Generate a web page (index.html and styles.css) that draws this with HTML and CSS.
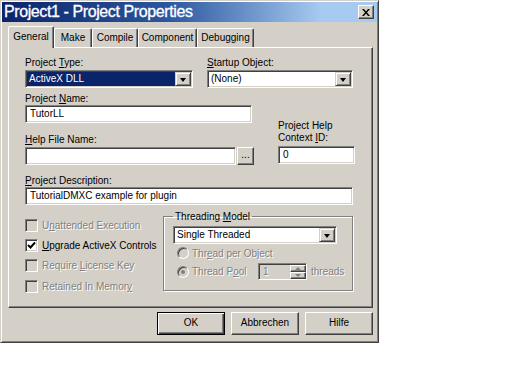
FILE: index.html
```html
<!DOCTYPE html>
<html>
<head>
<meta charset="utf-8">
<link rel="stylesheet" href="styles.css">
</head>
<body>
<div class="dialog">
  <div class="titlebar">
    <span class="title">Project1 - Project Properties</span>
    <span class="close"><svg width="8" height="7" viewBox="0 0 8 7"><path d="M0 0h2l2 2.4 2-2.4h2l-3 3.5 3 3.5h-2l-2-2.4-2 2.4h-2l3-3.5z" fill="#000"/></svg></span>
  </div>
  <div class="tabs">
    <div class="tab active t-general">General</div>
    <div class="tab t-make">Make</div>
    <div class="tab t-compile">Compile</div>
    <div class="tab t-component">Component</div>
    <div class="tab t-debug">Debugging</div>
  </div>
  <div class="panel">
    <div class="row-top">
      <div class="col-type">
        <div class="label">Project <u>T</u>ype:</div>
        <div class="combo"><span class="combo-text selected">ActiveX DLL</span><span class="drop"><i class="arrow"></i></span></div>
      </div>
      <div class="col-startup">
        <div class="label"><u>S</u>tartup Object:</div>
        <div class="combo"><span class="combo-text">(None)</span><span class="drop"><i class="arrow"></i></span></div>
      </div>
    </div>
    <div class="row-mid">
      <div class="col-name">
        <div class="label">Project <u>N</u>ame:</div>
        <div class="textbox name-box">TutorLL</div>
        <div class="label help-label"><u>H</u>elp File Name:</div>
        <div class="help-row">
          <div class="textbox help-box"></div>
          <div class="btn browse">...</div>
        </div>
      </div>
      <div class="col-context">
        <div class="label2">Project Help<br>Context <u>I</u>D:</div>
        <div class="textbox context-box">0</div>
      </div>
    </div>
    <div class="label desc-label"><u>P</u>roject Description:</div>
    <div class="textbox desc-box">TutorialDMXC example for plugin</div>
    <div class="row-bottom">
      <div class="checks">
        <div class="check disabled"><span class="cbox"></span><span class="ctext">U<u>n</u>attended Execution</span></div>
        <div class="check"><span class="cbox on"><svg width="9" height="9" viewBox="0 0 9 9"><path d="M1 4l2.5 2.5L8 1.5" fill="none" stroke="#000" stroke-width="2"/></svg></span><span class="ctext"><u>U</u>pgrade ActiveX Controls</span></div>
        <div class="check disabled"><span class="cbox"></span><span class="ctext">Require <u>L</u>icense Key</span></div>
        <div class="check disabled"><span class="cbox"></span><span class="ctext">Retained In Memor<u>y</u></span></div>
      </div>
      <fieldset class="group">
        <legend>Threading <u>M</u>odel</legend>
        <div class="combo single"><span class="combo-text">Single Threaded</span><span class="drop"><i class="arrow"></i></span></div>
        <div class="radio-row r1 disabled"><span class="radio"></span><span class="rtext">Thr<u>e</u>ad per Object</span></div>
        <div class="radio-row r2 disabled"><span class="radio"><i class="dot"></i></span><span class="rtext pool">Thread P<u>o</u>ol</span>
          <span class="spin"><span class="spin-text">1</span><span class="spin-btns"><span class="sb"><i class="up"></i></span><span class="sb"><i class="down"></i></span></span></span>
          <span class="threads">threads</span>
        </div>
      </fieldset>
    </div>
  </div>
  <div class="buttons">
    <div class="btn big default">OK</div>
    <div class="btn big">Abbrechen</div>
    <div class="btn big">Hilfe</div>
  </div>
</div>
</body>
</html>
```
FILE: styles.css
```css
* { box-sizing: border-box; }
body {
  margin: 0;
  background: #fff;
  font-family: "Liberation Sans", Arial, sans-serif;
  font-size: 10px;
  color: #000;
}
u { text-decoration: underline; text-underline-offset: 1px; }

.dialog {
  width: 379px;
  height: 343px;
  background: #d4d0c8;
  border: 1px solid;
  border-color: #d4d0c8 #404040 #404040 #d4d0c8;
  box-shadow: inset 1px 1px 0 #fff, inset -1px -1px 0 #808080;
  padding: 1px;
  display: flex;
  flex-direction: column;
}

.titlebar {
  height: 20px;
  flex: none;
  display: flex;
  align-items: center;
  padding-left: 2px;
  background: linear-gradient(90deg, #0a246a 0%, #2d58a0 45%, #a6caf0 85%, #a6caf0 100%);
}
.title {
  color: #fff;
  font-size: 16px;
  letter-spacing: -0.4px;
  -webkit-text-stroke: 0.3px #fff;
  line-height: 20px;
  white-space: nowrap;
}
.close {
  margin-left: auto;
  margin-right: 3px;
  width: 16px;
  height: 14px;
  background: #d4d0c8;
  border: 1px solid;
  border-color: #fff #404040 #404040 #fff;
  box-shadow: inset -1px -1px 0 #808080;
  display: flex;
  align-items: center;
  justify-content: center;
}
.close svg { display: block; margin-left: -1px; }

.tabs {
  height: 25px;
  flex: none;
  display: flex;
  align-items: flex-end;
  padding-left: 6px;
}
.tab {
  height: 19px;
  line-height: 17px;
  text-align: center;
  border: 1px solid;
  border-bottom: none;
  border-color: #fff #404040 #fff #fff;
  border-radius: 2px 2px 0 0;
  box-shadow: inset -1px 0 0 #808080;
}
.tab.active {
  height: 22px;
  line-height: 19px;
  margin-bottom: -1px;
  position: relative;
  z-index: 1;
  background: #d4d0c8;
}
.t-general { width: 46px; }
.t-make { width: 38px; }
.t-compile { width: 46px; }
.t-component { width: 59px; }
.t-debug { width: 57px; }

.panel {
  margin-left: 6px;
  width: 365px;
  height: 261px;
  flex: none;
  border: 1px solid;
  border-color: #fff #404040 #404040 #fff;
  box-shadow: inset -1px -1px 0 #808080;
  padding: 8px 0 0 16px;
}

.label { line-height: 13px; height: 13px; white-space: nowrap; }
.label2 { line-height: 12px; white-space: nowrap; margin-bottom: 2px; }

.row-top { display: flex; gap: 14px; }
.col-type { width: 168px; }
.col-startup { width: 146px; }
.combo {
  margin-top: 1px;
  height: 18px;
  display: flex;
  background: #fff;
  border: 1px solid;
  border-color: #808080 #fff #fff #808080;
  box-shadow: inset 1px 1px 0 #404040, inset -1px -1px 0 #d4d0c8;
  padding: 1px;
}
.combo-text {
  flex: 1;
  line-height: 14px;
  padding-left: 2px;
  white-space: nowrap;
}
.combo-text.selected { background: #0a246a; color: #fff; }
.drop {
  width: 16px;
  height: 14px;
  background: #d4d0c8;
  border: 1px solid;
  border-color: #d4d0c8 #404040 #404040 #d4d0c8;
  box-shadow: inset 1px 1px 0 #fff, inset -1px -1px 0 #808080;
  display: flex;
  align-items: center;
  justify-content: center;
}
.arrow {
  width: 0; height: 0;
  border-left: 3.5px solid transparent;
  border-right: 3.5px solid transparent;
  border-top: 4px solid #000;
  margin-top: 1px;
}

.textbox {
  height: 18px;
  background: #fff;
  border: 1px solid;
  border-color: #808080 #fff #fff #808080;
  box-shadow: inset 1px 1px 0 #404040, inset -1px -1px 0 #d4d0c8;
  padding: 0 4px;
  line-height: 16px;
  white-space: nowrap;
}

.row-mid { display: flex; margin-top: 4px; }
.col-name { width: 229px; }
.name-box { width: 227px; }
.help-label { margin-top: 10px; }
.help-row { display: flex; margin-top: 1px; }
.help-box { width: 211px; margin-right: 1px; }
.btn {
  background: #d4d0c8;
  border: 1px solid;
  border-color: #fff #404040 #404040 #fff;
  box-shadow: inset -1px -1px 0 #808080;
  text-align: center;
}
.browse { width: 17px; height: 18px; line-height: 14px; }
.col-context { margin-left: 24px; width: 77px; align-self: flex-end; margin-bottom: 1px; }

.desc-label { margin-top: 9px; }
.desc-box { width: 328px; }

.row-bottom { display: flex; }
.checks { width: 138px; padding-top: 10px; }
.check { display: flex; align-items: center; height: 20.4px; white-space: nowrap; }
.cbox {
  width: 13px; height: 13px; flex: none;
  background: #d4d0c8;
  border: 1px solid;
  border-color: #808080 #fff #fff #808080;
  box-shadow: inset 1px 1px 0 #404040, inset -1px -1px 0 #d4d0c8;
  display: flex; align-items: center; justify-content: center;
}
.cbox.on { background: #fff; }
.cbox svg { display: block; }
.ctext { margin-left: 4px; }
.disabled .ctext, .disabled .rtext, .disabled .threads, .disabled .spin-text {
  color: #808080;
  text-shadow: 1px 1px 0 #fff;
}

.group {
  margin: 5px 0 0 0;
  width: 190px;
  height: 81px;
  border: 1px solid #808080;
  box-shadow: 1px 1px 0 #fff, inset 1px 1px 0 #fff;
  padding: 0 0 0 9px;
  min-width: 0;
}
.group legend {
  padding: 0 2px;
  line-height: 13px;
  white-space: nowrap;
}
.single { width: 164px; margin-top: 3px; }
.radio-row { display: flex; align-items: center; white-space: nowrap; }
.r1 { height: 14px; margin-top: 2px; }
.r2 { height: 17px; margin-top: 3px; }
.radio {
  width: 12px; height: 12px; flex: none;
  margin-left: 4px;
  border-radius: 50%;
  border: 1px solid;
  border-color: #808080 #fff #fff #808080;
  box-shadow: inset 1px 1px 0 #404040;
  background: #d4d0c8;
  display: flex; align-items: center; justify-content: center;
}
.dot { width: 4px; height: 4px; border-radius: 50%; background: #808080; }
.rtext { margin-left: 3px; }
.rtext.pool { width: 66px; }
.spin {
  width: 49px; height: 17px;
  display: flex;
  background: #d4d0c8;
  border: 1px solid;
  border-color: #808080 #fff #fff #808080;
  box-shadow: inset 1px 1px 0 #404040;
  padding: 1px 0 0 1px;
}
.spin-text { flex: 1; padding-left: 3px; line-height: 14px; }
.spin-btns { width: 16px; display: flex; flex-direction: column; }
.sb {
  flex: 1;
  background: #d4d0c8;
  border: 1px solid;
  border-color: #fff #404040 #404040 #fff;
  box-shadow: inset -1px -1px 0 #808080;
  display: flex; align-items: center; justify-content: center;
}
.up { width: 0; height: 0; border-left: 3px solid transparent; border-right: 3px solid transparent; border-bottom: 3px solid #808080; }
.down { width: 0; height: 0; border-left: 3px solid transparent; border-right: 3px solid transparent; border-top: 3px solid #808080; }
.threads { margin-left: 4px; }

.buttons {
  display: flex;
  justify-content: flex-end;
  gap: 6px;
  margin-top: 4px;
  padding-right: 4px;
}
.btn.big { width: 68px; height: 23px; line-height: 20px; }
.btn.default {
  border-color: #000;
  box-shadow: inset 1px 1px 0 #fff, inset -1px -1px 0 #404040, inset -2px -2px 0 #808080;
}
```
